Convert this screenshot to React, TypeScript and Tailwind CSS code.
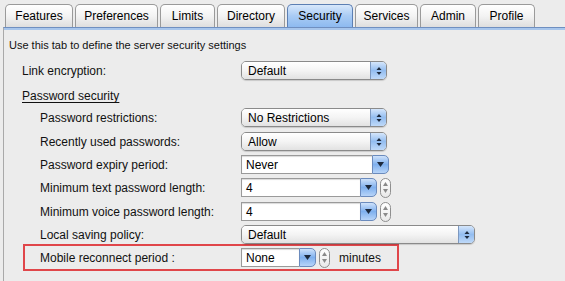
import React from "react";

const tabs = [
  { label: "Features", w: 68 },
  { label: "Preferences", w: 83 },
  { label: "Limits", w: 55 },
  { label: "Directory", w: 68 },
  { label: "Security", w: 66, active: true },
  { label: "Services", w: 63 },
  { label: "Admin", w: 56 },
  { label: "Profile", w: 57 },
];

const Updown = () => (
  <svg width="6" height="10" viewBox="0 0 6 10">
    <path d="M3 1 L5.5 4 L0.5 4 Z" fill="#1d2a3d" />
    <path d="M3 9 L5.5 6 L0.5 6 Z" fill="#1d2a3d" />
  </svg>
);

const Popup = ({ value, width }: { value: string; width: number }) => (
  <div
    className="flex h-[19px] items-stretch overflow-hidden rounded-[5px] border border-[#8a8a8a] shadow-[0_1px_1px_rgba(0,0,0,0.15)]"
    style={{ width }}
  >
    <div className="flex flex-1 items-center bg-gradient-to-b from-[#ffffff] via-[#f4f4f4] to-[#e2e2e2] pl-[6px] text-[12px] text-black">
      {value}
    </div>
    <div className="flex w-[16px] items-center justify-center border-l border-[#7d98bf] bg-gradient-to-b from-[#d5e6fb] via-[#93bdf0] to-[#bfd9f8]">
      <Updown />
    </div>
  </div>
);

const Stepper = () => (
  <div className="ml-[3px] flex h-[20px] w-[11px] flex-col items-center justify-center gap-[3px] rounded-full border border-[#8f8f8f] bg-gradient-to-b from-white to-[#e9e9e9]">
    <svg width="5" height="4" viewBox="0 0 5 4">
      <path d="M2.5 0 L5 4 L0 4 Z" fill="#8a8a8a" />
    </svg>
    <svg width="5" height="4" viewBox="0 0 5 4">
      <path d="M2.5 4 L5 0 L0 0 Z" fill="#8a8a8a" />
    </svg>
  </div>
);

const Combo = ({ value, width }: { value: string; width: number }) => (
  <div className="flex h-[19px] items-stretch" style={{ width }}>
    <div className="flex flex-1 items-center border border-[#9a9a9a] border-r-0 bg-white pl-[4px] text-[12px] text-black shadow-[inset_0_1px_1px_rgba(0,0,0,0.15)]">
      {value}
    </div>
    <div className="flex w-[17px] items-center justify-center rounded-r-[5px] border border-[#6b8bbd] bg-gradient-to-b from-[#cfe2fa] via-[#7fb0ee] to-[#b7d4f8]">
      <svg width="7" height="5" viewBox="0 0 7 5">
        <path d="M0 0 L7 0 L3.5 5 Z" fill="#1d2a3d" />
      </svg>
    </div>
  </div>
);

const Row = ({ label, indent, mt, children }: { label: string; indent?: boolean; mt: number; children: React.ReactNode }) => (
  <div className="flex h-[19px] items-center" style={{ marginTop: mt }}>
    <div className={indent ? "w-[237px] pl-[36px]" : "w-[237px] pl-[18px]"}>{label}</div>
    {children}
  </div>
);

export default function App() {
  return (
    <div
      className="h-[281px] w-[565px] overflow-hidden bg-[#ececec] text-[12px] text-[#111]"
      style={{ fontFamily: '"Lucida Grande", "Liberation Sans", Arial, sans-serif' }}
    >
      <div className="flex h-[27px] items-end gap-[2px] pl-[5px]">
        {tabs.map((t) => (
          <div
            key={t.label}
            className={
              t.active
                ? "flex h-[23px] items-center justify-center rounded-t-[5px] border border-b-0 border-[#5c7fb3] bg-gradient-to-b from-[#d8e8fb] via-[#a9cbf4] to-[#8dbaf0] text-[12px] text-black"
                : "flex h-[23px] items-center justify-center rounded-t-[5px] border border-b-0 border-[#9a9a9a] bg-gradient-to-b from-[#ffffff] via-[#f3f3f3] to-[#dedede] text-[12px] text-black"
            }
            style={{ width: t.w }}
          >
            {t.label}
          </div>
        ))}
      </div>
      <div className="ml-[3px] h-[254px] border-l border-t border-l-[#a9a9a9] border-t-[#6f8fc0] bg-[#ececec]">
        <div className="h-[2px] bg-[#a8c6ec]" />
        <div className="mt-[8px] pl-[5px] text-[11px] leading-[14px]">Use this tab to define the server security settings</div>
        <Row label="Link encryption:" mt={9}>
          <Popup value="Default" width={146} />
        </Row>
        <div className="mt-[9px] h-[14px] pl-[18px] leading-[14px] underline underline-offset-2">Password security</div>
        <Row label="Password restrictions:" indent mt={5}>
          <Popup value="No Restrictions" width={146} />
        </Row>
        <Row label="Recently used passwords:" indent mt={5}>
          <Popup value="Allow" width={146} />
        </Row>
        <Row label="Password expiry period:" indent mt={4}>
          <Combo value="Never" width={148} />
        </Row>
        <Row label="Minimum text password length:" indent mt={4}>
          <Combo value="4" width={136} />
          <Stepper />
        </Row>
        <Row label="Minimum voice password length:" indent mt={5}>
          <Combo value="4" width={136} />
          <Stepper />
        </Row>
        <Row label="Local saving policy:" indent mt={4}>
          <Popup value="Default" width={234} />
        </Row>
        <div className="ml-[19px] flex h-[27px] w-[376px] items-center border-2 border-[#e0464a]">
          <div className="w-[216px] pl-[15px]">Mobile reconnect period :</div>
          <Combo value="None" width={75} />
          <Stepper />
          <span className="ml-[9px]">minutes</span>
        </div>
      </div>
    </div>
  );
}
